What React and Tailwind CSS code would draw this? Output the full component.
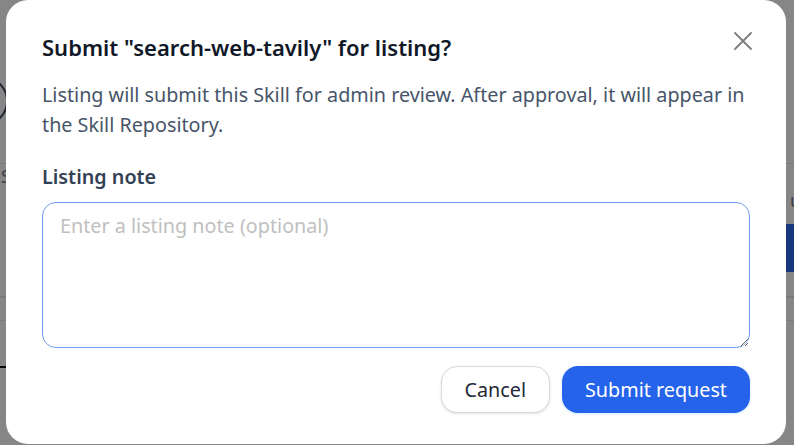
const X = () => (
  <svg width="20" height="20" viewBox="0 0 20 20" fill="none" stroke="#7d7d7d" strokeWidth="1.8" strokeLinecap="round">
    <path d="M2 2 L18 18 M18 2 L2 18" />
  </svg>
);

// page that sits behind the dialog, only its edges show
const BackPage = () => (
  <div className="flex h-full flex-col">
    <div className="h-[76px]" />
    <div className="-ml-[42px] h-[50px] w-[50px] rounded-full border-2 border-[#334155]" />
    <div className="mt-[37px] h-px bg-gray-200" />
    <div className="flex justify-between text-[18px] leading-[24px] text-gray-500">
      <span className="pl-px">S</span>
      <span className="-mr-[7px] mt-[24px]">u</span>
    </div>
    <div className="mt-[12px] flex justify-end">
      <div className="h-[48px] w-[20px] bg-[#2563eb]" />
    </div>
    <div className="mt-[24px] h-[2px] bg-gray-200" />
    <div className="mt-[22px] h-px bg-gray-200" />
    <div className="mt-[45px] h-[2px] w-[6px] bg-black" />
  </div>
);

export default function App() {
  return (
    <div
      className="relative h-[445px] w-[794px] overflow-hidden bg-white"
      style={{ fontFamily: '"Noto Sans", "Open Sans", sans-serif' }}
    >
      <BackPage />

      {/* overlay + dialog */}
      <div className="absolute inset-0 flex justify-center bg-[#0d0d0d]/50 pr-[2px]">
        <div className="relative flex h-[444px] w-[780px] flex-col rounded-[22px] bg-white px-9 pb-[31px] pt-8">
          <button className="absolute right-[33px] top-[31px]" aria-label="Close">
            <X />
          </button>
          <h2 className="text-[22px] font-semibold leading-[30px] text-[#111827]">
            Submit "search-web-tavily" for listing?
          </h2>
          <p className="mt-[18px] text-[19.75px] leading-[30px] text-[#475569]">
            Listing will submit this Skill for admin review. After approval, it will appear in the Skill Repository.
          </p>
          <label className="mt-[22px] text-[19.75px] font-semibold leading-[30px] text-[#334155]">Listing note</label>
          <textarea
            className="mt-[10px] h-[146px] w-full rounded-[14px] border border-[#6f9cf0] px-[17px] py-2 text-[19.75px] leading-[30px] text-gray-800 outline-none placeholder:text-[#bfbfbf]"
            placeholder="Enter a listing note (optional)"
          />
          <div className="mt-[18px] flex justify-end gap-3">
            <button className="h-[47px] rounded-[16px] border border-[#dadada] bg-white px-[23px] text-[19.75px] text-[#1f2937] shadow-sm">
              Cancel
            </button>
            <button className="h-[47px] rounded-[16px] bg-[#2563eb] px-[23px] text-[19.75px] text-white shadow-sm shadow-blue-100">
              Submit request
            </button>
          </div>
        </div>
      </div>
    </div>
  );
}
